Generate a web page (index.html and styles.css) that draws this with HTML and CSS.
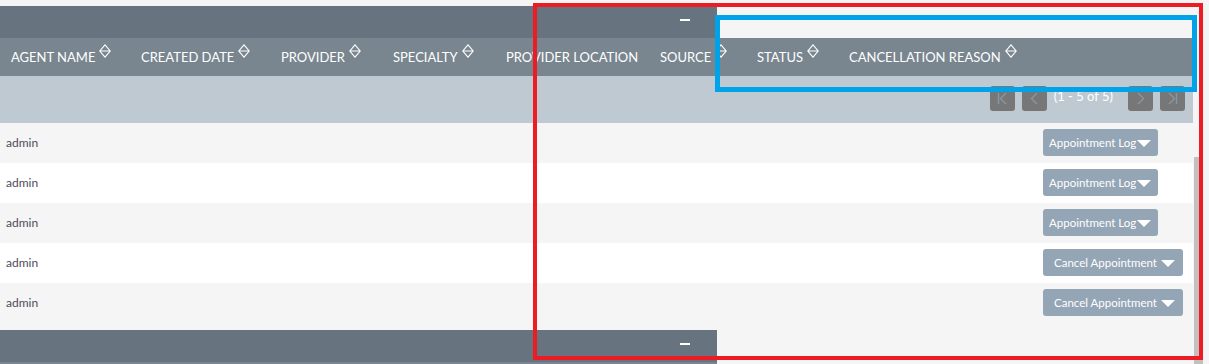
FILE: index.html
```html
<!DOCTYPE html>
<html lang="en">
<head>
  <meta charset="UTF-8" />
  <title>Appointments</title>
  <link rel="stylesheet" href="styles.css">
</head>
<body>
  <div class="page">
    <!-- Top panel bar -->
    <div class="panel-bar"><span class="collapse"></span></div>

    <div class="list">
      <div class="head-row">
        <div class="th c1">AGENT NAME <svg class="sort" width="12" height="14" viewBox="0 0 12 14"><path d="M6 0.8 L11.2 7 L6 13.2 L0.8 7 Z M0.8 7 H11.2" fill="none" stroke="#fff" stroke-width="1.1"/></svg></div>
        <div class="th c2">CREATED DATE <svg class="sort" width="12" height="14" viewBox="0 0 12 14"><path d="M6 0.8 L11.2 7 L6 13.2 L0.8 7 Z M0.8 7 H11.2" fill="none" stroke="#fff" stroke-width="1.1"/></svg></div>
        <div class="th c3">PROVIDER <svg class="sort" width="12" height="14" viewBox="0 0 12 14"><path d="M6 0.8 L11.2 7 L6 13.2 L0.8 7 Z M0.8 7 H11.2" fill="none" stroke="#fff" stroke-width="1.1"/></svg></div>
        <div class="th c4">SPECIALTY <svg class="sort" width="12" height="14" viewBox="0 0 12 14"><path d="M6 0.8 L11.2 7 L6 13.2 L0.8 7 Z M0.8 7 H11.2" fill="none" stroke="#fff" stroke-width="1.1"/></svg></div>
        <div class="th c5">PROVIDER LOCATION</div>
        <div class="th c6">SOURCE <svg class="sort" width="12" height="14" viewBox="0 0 12 14"><path d="M6 0.8 L11.2 7 L6 13.2 L0.8 7 Z M0.8 7 H11.2" fill="none" stroke="#fff" stroke-width="1.1"/></svg></div>
        <div class="th c7">STATUS <svg class="sort" width="12" height="14" viewBox="0 0 12 14"><path d="M6 0.8 L11.2 7 L6 13.2 L0.8 7 Z M0.8 7 H11.2" fill="none" stroke="#fff" stroke-width="1.1"/></svg></div>
        <div class="th c8">CANCELLATION REASON <svg class="sort" width="12" height="14" viewBox="0 0 12 14"><path d="M6 0.8 L11.2 7 L6 13.2 L0.8 7 Z M0.8 7 H11.2" fill="none" stroke="#fff" stroke-width="1.1"/></svg></div>
      </div>

      <div class="pager-row">
        <button class="pg"><svg width="25" height="25" viewBox="0 0 25 25"><path d="M8.5 7 V18 M16 7 L10.5 12.5 L16 18" fill="none" stroke="#8797a6" stroke-width="1.4"/></svg></button>
        <button class="pg"><svg width="25" height="25" viewBox="0 0 25 25"><path d="M15 7 L9.5 12.5 L15 18" fill="none" stroke="#8797a6" stroke-width="1.4"/></svg></button>
        <span class="pg-text">(1 - 5 of 5)</span>
        <button class="pg next"><svg width="25" height="25" viewBox="0 0 25 25"><path d="M10 7 L15.5 12.5 L10 18" fill="none" stroke="#8797a6" stroke-width="1.4"/></svg></button>
        <button class="pg"><svg width="25" height="25" viewBox="0 0 25 25"><path d="M16.5 7 V18 M9 7 L14.5 12.5 L9 18" fill="none" stroke="#8797a6" stroke-width="1.4"/></svg></button>
      </div>

      <div class="row odd">
        <div class="name">admin</div>
        <div class="actions"><button class="act">Appointment Log<span class="caret"></span></button></div>
      </div>
      <div class="row">
        <div class="name">admin</div>
        <div class="actions"><button class="act">Appointment Log<span class="caret"></span></button></div>
      </div>
      <div class="row odd">
        <div class="name">admin</div>
        <div class="actions"><button class="act">Appointment Log<span class="caret"></span></button></div>
      </div>
      <div class="row">
        <div class="name">admin</div>
        <div class="actions"><button class="act wide">Cancel Appointment <span class="caret"></span></button></div>
      </div>
      <div class="row odd">
        <div class="name">admin</div>
        <div class="actions"><button class="act wide">Cancel Appointment <span class="caret"></span></button></div>
      </div>
    </div>

    <!-- Bottom panel bar -->
    <div class="panel-bar bottom"><span class="collapse"></span></div>
    <div class="next-head"></div>
  </div>

  <div class="scroll-thumb"></div>

  <!-- Annotation boxes -->
  <div class="mark red"></div>
  <div class="mark blue"></div>
</body>
</html>
```

FILE: styles.css
```css
* {
  margin: 0;
  padding: 0;
  box-sizing: border-box;
  font-family: 'Lato', 'Liberation Sans', sans-serif;
}

body {
  background-color: #f5f5f5;
  width: 1209px;
  height: 364px;
  overflow: hidden;
  position: relative;
}

.page {
  padding-top: 6px;
}

.panel-bar {
  width: 717px;
  height: 32px;
  background-color: #67737e;
  display: flex;
  justify-content: flex-end;
  align-items: flex-start;
  padding-right: 27px;
}

.collapse {
  display: block;
  width: 10px;
  height: 2px;
  margin-top: 13px;
  background-color: #ffffff;
}

.panel-bar.bottom {
  margin-top: 7px;
}

.next-head {
  width: 717px;
  height: 4px;
  background-color: #79868f;
}

.list {
  width: 1193px;
}

.head-row {
  display: flex;
  height: 38px;
  background-color: #79868f;
  align-items: center;
}

.th {
  color: #ffffff;
  font-size: 13px;
  padding-left: 11px;
  white-space: nowrap;
  display: flex;
  align-items: flex-start;
}

.sort {
  margin-left: 4px;
  margin-top: -5px;
}

.c1 { width: 130px; }
.c2 { width: 140px; }
.c3 { width: 112px; }
.c4 { width: 113px; }
.c5 { width: 154px; }
.c6 { width: 97px; }
.c7 { width: 92px; }
.c8 { flex: 1; }

.pager-row {
  height: 47px;
  background-color: #bfc9d2;
  display: flex;
  justify-content: flex-end;
  align-items: flex-start;
  padding-top: 10px;
  padding-right: 8px;
  gap: 7px;
}

.pg {
  width: 25px;
  height: 25px;
  border: none;
  border-radius: 3px;
  background-color: #777777;
  display: flex;
}

.pg.next {
  margin-left: 8px;
}

.pg-text {
  color: #ffffff;
  font-size: 13px;
  line-height: 20px;
}

.row {
  height: 40px;
  display: flex;
  align-items: center;
  background-color: #ffffff;
}

.row.odd {
  background-color: #f5f5f5;
}

.name {
  width: 1043px;
  padding-left: 6px;
  padding-bottom: 2px;
  font-size: 12px;
  color: #4d4b5c;
}

.act {
  height: 27px;
  width: 115px;
  margin-bottom: 1px;
  border: none;
  border-radius: 3px;
  background-color: #94a5b5;
  color: #ffffff;
  font-size: 11.5px;
  display: flex;
  align-items: center;
  padding-left: 6px;
  white-space: nowrap;
}

.act.wide {
  width: 140px;
  padding-left: 11px;
}

.caret {
  display: inline-block;
  width: 0;
  height: 0;
  margin-left: 1px;
  margin-top: 2px;
  border-left: 7px solid transparent;
  border-right: 7px solid transparent;
  border-top: 7px solid #ffffff;
}

.act.wide .caret {
  margin-left: 4px;
}

.scroll-thumb {
  position: absolute;
  left: 1194px;
  top: 157px;
  width: 9px;
  height: 207px;
  background-color: #c1c1c1;
}

.mark {
  position: absolute;
  pointer-events: none;
}

.mark.red {
  left: 533px;
  top: 3px;
  width: 670px;
  height: 357px;
  border: 4px solid #ed1c24;
}

.mark.blue {
  left: 715px;
  top: 15px;
  width: 482px;
  height: 77px;
  border: 5px solid #00a2e8;
}
```
